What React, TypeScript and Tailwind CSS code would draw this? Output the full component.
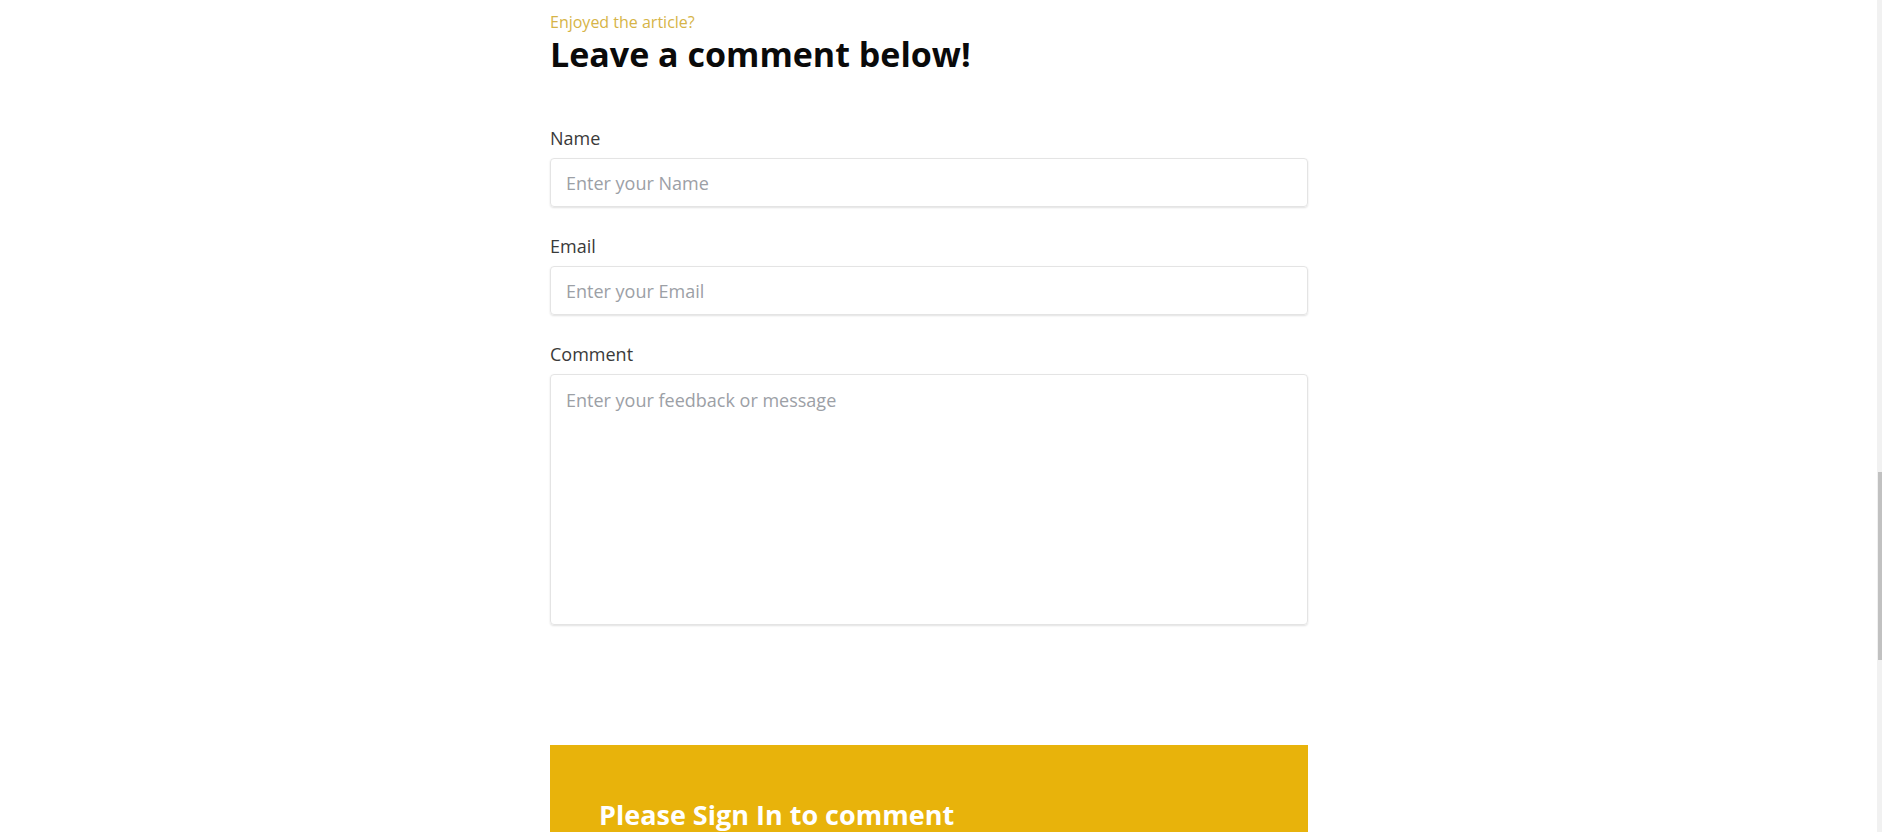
export default function App() {
  return (
    <div className="min-h-screen bg-white text-[#3a3a3a]" style={{ fontFamily: '"Open Sans", "Noto Sans", sans-serif' }}>
      <div className="flex">
        <div className="w-[550px] shrink-0" />
        <div className="w-[758px] shrink-0 pt-[10px]">
          <p className="text-[16px] leading-6 text-[#d6b447]">Enjoyed the article?</p>
          <h2 className="text-[34px] font-bold leading-10 text-[#0a0a0a]">Leave a comment below!</h2>

          <form className="mt-[51px] flex flex-col gap-[26px]">
            <div className="flex flex-col gap-[6px]">
              <label className="text-[18px] leading-[27px] text-[#3a3a3a]">Name</label>
              <input
                className="h-[49px] w-full rounded-[4px] border border-[#e4e4e4] px-[15px] text-[18px] shadow-[0_1px_2px_rgba(0,0,0,0.12)] outline-none placeholder:text-[#9ca0a6]"
                placeholder="Enter your Name"
              />
            </div>
            <div className="flex flex-col gap-[6px]">
              <label className="text-[18px] leading-[27px] text-[#3a3a3a]">Email</label>
              <input
                className="h-[49px] w-full rounded-[4px] border border-[#e4e4e4] px-[15px] text-[18px] shadow-[0_1px_2px_rgba(0,0,0,0.12)] outline-none placeholder:text-[#9ca0a6]"
                placeholder="Enter your Email"
              />
            </div>
            <div className="flex flex-col gap-[6px]">
              <label className="text-[18px] leading-[27px] text-[#3a3a3a]">Comment</label>
              <textarea
                className="h-[251px] w-full resize-none rounded-[4px] border border-[#e4e4e4] px-[15px] pt-[12px] pb-[10px] text-[18px] shadow-[0_1px_2px_rgba(0,0,0,0.12)] outline-none placeholder:text-[#9ca0a6]"
                placeholder="Enter your feedback or message"
              />
            </div>
          </form>

          <div className="mt-[120px] bg-[#e8b30b] px-[49px] pt-[52px] pb-[60px]">
            <h3 className="text-[27px] font-bold leading-9 text-white">Please Sign In to comment</h3>
          </div>
        </div>
      </div>
      <div className="fixed right-0 top-0 h-screen w-[5px] bg-[#f1f1f1]">
        <div className="mt-[472px] h-[188px] w-[4px] ml-[1px] bg-[#c1c1c1]" />
      </div>
    </div>
  )
}
